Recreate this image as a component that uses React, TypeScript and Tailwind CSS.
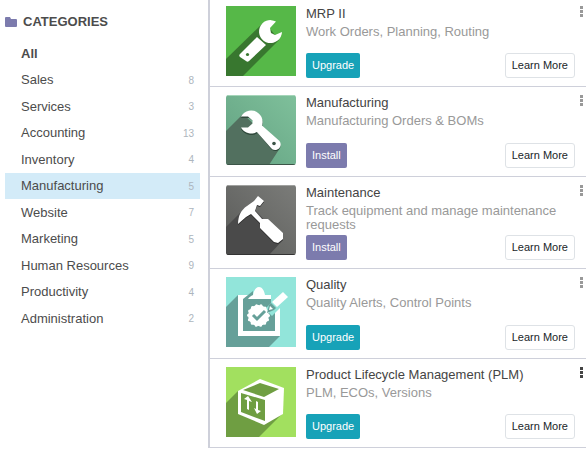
import { useState } from 'react';
import type { ReactNode } from 'react';

const categories = [
  { name: 'All' },
  { name: 'Sales', count: 8 },
  { name: 'Services', count: 3 },
  { name: 'Accounting', count: 13 },
  { name: 'Inventory', count: 4 },
  { name: 'Manufacturing', count: 5 },
  { name: 'Website', count: 7 },
  { name: 'Marketing', count: 5 },
  { name: 'Human Resources', count: 9 },
  { name: 'Productivity', count: 4 },
  { name: 'Administration', count: 2 },
];

const MrpIcon = () => (
  <svg viewBox="0 0 70 70" className="h-[70px] w-[70px] shrink-0" aria-hidden="true">
    <path fill="#56b848" d="M0 0h70v70H0z" />
    <path fill="#38772f" d="M36 18 0 53v17h17l36-36-8-10z" />
    <path fill="#fff" d="M50 15.500A11.500 11.500 0 1 0 56 26l-7 3-4-2-1-5z" />
    <path fill="#fff" d="m31 31 9 8-17 16c-1 1-2 1-3 0l-6-4c-1-1-1-2 0-3z" />
    <circle cx="21.500" cy="48.500" r="1.600" fill="#38772f" />
  </svg>
);

const WrenchIcon = () => (
  <svg viewBox="0 0 70 70" className="h-[70px] w-[70px] shrink-0 rounded-[3px]" aria-hidden="true">
    <defs>
      <linearGradient id="greenBg" x1="1" y1="0" x2="0" y2="1">
        <stop offset="0" stopColor="#7fc09b" />
        <stop offset="1" stopColor="#62a181" />
      </linearGradient>
    </defs>
    <path fill="url(#greenBg)" d="M0 0h70v70H0z" />
    <path fill="#52705f" d="M17 19 0 36v34h43l11-17-22-20z" />
    <path fill="#3c5548" d="M0 69h70v1H0z" />
    <path fill="#a5d5b9" d="M0 0h70v1H0z" />
    <path
      fill="#2f493b"
      d="M15 23A11.500 11.500 0 1 1 15 34h7l5-4v-4l-4-3zM31 37l5-5 17 15c3 4 1 9-4 9-1 0-3-1-4-2z"
    />
    <path
      fill="#fff"
      d="M15 21.500A11.500 11.500 0 1 1 15 32.500h7l4.500-4v-3l-4.500-4zM30 36l6-5.500 17.500 15.500c3 4 0 9-4.500 9-2 0-3-1-4-2z"
    />
    <circle cx="48" cy="48.500" r="1.800" fill="#3c5548" />
  </svg>
);

const HammerIcon = () => (
  <svg viewBox="0 0 70 70" className="h-[70px] w-[70px] shrink-0 rounded-[3px]" aria-hidden="true">
    <defs>
      <linearGradient id="greyBg" x1="1" y1="0" x2="0" y2="1">
        <stop offset="0" stopColor="#7b7c79" />
        <stop offset="1" stopColor="#595a58" />
      </linearGradient>
    </defs>
    <path fill="url(#greyBg)" d="M0 0h70v70H0z" />
    <path fill="#4a4a4a" d="M17 25 0 42v28h43l14-15-28-30z" />
    <path fill="#333" d="M0 69h70v1H0z" />
    <path fill="#a0a19f" d="M0 0h70v1H0z" />
    <path
      fill="#2b2b2b"
      d="m32 12 6 5-4 5-3-1-2 6 7 8h6l15 14v6l-5 4-4-1-14-14v-5l-9-9-5 3-8 7c0-8 3-14 9-18l7-5z"
    />
    <path
      fill="#fff"
      d="m32 11 6 5-4 5-3-1-2 6 7 8h6l15 14v6l-5 4-4-1-14-14v-5l-9-9-5 3-8 7c0-8 3-14 9-18l7-5z"
    />
  </svg>
);

const QualityIcon = () => (
  <svg viewBox="0 0 70 70" className="h-[70px] w-[70px] shrink-0" aria-hidden="true">
    <path fill="#92e5da" d="M0 0h70v70H0z" />
    <path fill="#66a099" d="M12 18 0 30v40h43l11-11V40z" />
    <path fill="#fff" d="M12 18h42v41H12z" />
    <path fill="#66a099" d="M17 22h32v32H17zM17 22l10-8v8z" />
    {/* gap around the pen */}
    <path fill="#92e5da" d="M45 17h17v14h-8l-8 8-7-7 6-6z" />
    <path fill="#fff" d="M22 22c1-2 3-3 5-4 1-5 3-8 6-8s5 3 6 8c2 1 4 2 5 4z" />
    <circle cx="32.500" cy="38.500" r="10.500" fill="#fff" />
    <circle
      cx="32.500"
      cy="38.500"
      r="10"
      fill="none"
      stroke="#fff"
      strokeWidth="3"
      strokeDasharray="0 4.488"
      strokeLinecap="round"
    />
    <path fill="none" stroke="#66a099" strokeWidth="3" d="m27 38 4 4 8-8" />
    <path fill="#fff" d="m57 15 5 5-11 10-5-5z" />
    <path fill="#66a099" d="m45 26 5 5-2 2-7 3 2-8z" />
    <path fill="#fff" d="m44 29 3 3-4 1z" />
  </svg>
);

const PlmIcon = () => (
  <svg viewBox="0 0 70 70" className="h-[70px] w-[70px] shrink-0" aria-hidden="true">
    <path fill="#a2e05f" d="M0 0h70v70H0z" />
    <path fill="#6f9e42" d="M12 24 0 36v34h33l24-24z" />
    <path fill="#fff" d="m12 24 22-12 24 9-1 26-19 11-26-11z" />
    <path fill="#6f9e42" d="m17 23 17-7 19 6-15 8zM15 26l24 7v21l-24-9z" />
    <path fill="#fff" d="m22 29 4 6-3-1v9l-2-1v-9l-3-1zM30 34l2 1v8l3 1-4 3-3-6 2 1z" />
  </svg>
);

type AppInfo = {
  name: string;
  summary: string;
  action: 'Upgrade' | 'Install';
  icon: ReactNode;
};

const apps: AppInfo[] = [
  { name: 'MRP II', summary: 'Work Orders, Planning, Routing', action: 'Upgrade', icon: <MrpIcon /> },
  { name: 'Manufacturing', summary: 'Manufacturing Orders & BOMs', action: 'Install', icon: <WrenchIcon /> },
  { name: 'Maintenance', summary: 'Track equipment and manage maintenance requests', action: 'Install', icon: <HammerIcon /> },
  { name: 'Quality', summary: 'Quality Alerts, Control Points', action: 'Upgrade', icon: <QualityIcon /> },
  { name: 'Product Lifecycle Management (PLM)', summary: 'PLM, ECOs, Versions', action: 'Upgrade', icon: <PlmIcon /> },
];

function AppCard({ app }: { app: AppInfo }) {
  return (
    <article className="group flex border-b border-[#ced0da] pt-2 pr-[2px] pb-2 pl-4 first:pt-[6px]">
      {app.icon}
      <div className="ml-[10px] flex min-h-[73px] min-w-0 flex-1 flex-col group-first:min-h-[72px] group-last:min-h-[72px]">
        <h3 className="text-[13px] leading-4 text-[#444]">{app.name}</h3>
        <p className="mt-[3px] mb-[3px] text-[13px] leading-[14px] text-[#999]">{app.summary}</p>
        <div className="mt-auto flex justify-between">
          {app.action === 'Upgrade' ? (
            <button className="h-[25px] rounded-[2px] bg-[#17a2b8] px-[6px] text-[11px] text-white">Upgrade</button>
          ) : (
            <button className="h-[25px] rounded-[2px] bg-[#7c7bad] px-[6px] text-[11px] text-white">Install</button>
          )}
          <a
            href="#"
            className="flex h-[25px] items-center rounded-[3px] border border-[#dee2e6] px-[6px] text-[11px] text-[#212529]"
          >
            Learn More
          </a>
        </div>
      </div>
      <button
        aria-label={`${app.name} menu`}
        className="ml-[5px] w-1 self-start text-[#999] group-last:text-[#444]"
      >
        <svg viewBox="0 0 4 11" className="h-[11px] w-1" fill="currentColor" aria-hidden="true">
          <path d="M0 0h3v3H0zM0 4h3v3H0zM0 8h3v3H0z" />
        </svg>
      </button>
    </article>
  );
}

export default function App() {
  const [selected, setSelected] = useState('Manufacturing');

  return (
    <div className="flex bg-white font-['Liberation_Sans',Arial,sans-serif] text-[#4c4c4c]">
      <aside className="w-[208px] shrink-0 pt-3 pr-2 pl-[5px]">
        <h2 className="flex h-5 items-center gap-[6px] text-[13px] font-bold">
          <svg viewBox="0 0 12 10" className="h-[10px] w-3" aria-hidden="true">
            <path fill="#7c7bad" d="M1 0h4l1 2h5q1 0 1 1v6q0 1-1 1H1q-1 0-1-1V1q0-1 1-1z" />
          </svg>
          CATEGORIES
        </h2>
        <ul className="mt-2">
          {categories.map((cat) => (
            <li key={cat.name} className="odd:h-[27px] even:h-[26px]">
              <button
                onClick={() => setSelected(cat.name)}
                className={`flex h-full w-full items-center justify-between pr-[6px] pl-4 text-[13px] ${
                  cat.name === selected ? 'bg-[#d3ebf8]' : ''
                } ${cat.name === 'All' ? 'font-bold' : ''}`}
              >
                <span>{cat.name}</span>
                <span className="text-[10px] text-[#adb5bd]">{cat.count}</span>
              </button>
            </li>
          ))}
        </ul>
      </aside>
      <main className="min-w-0 flex-1 border-l-2 border-[#ced0da]">
        {apps.map((app) => (
          <AppCard key={app.name} app={app} />
        ))}
      </main>
    </div>
  );
}
